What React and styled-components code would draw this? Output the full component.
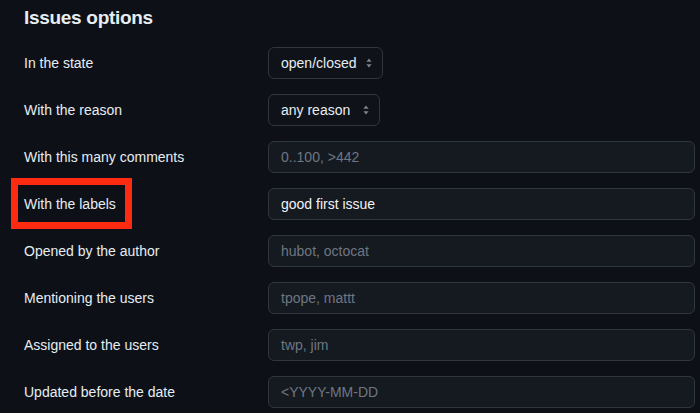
import React from 'react'
import styled, { createGlobalStyle } from 'styled-components'

const GlobalStyle = createGlobalStyle`
  html, body {
    margin: 0;
    padding: 0;
    background: #0d1117;
  }
  body {
    font-family: "Liberation Sans", Arial, sans-serif;
    color: #e6edf3;
  }
`

// page wrapper
const Page = styled.div`
  width: 700px;
  height: 413px;
  box-sizing: border-box;
  padding: 3px 5px 0 24px;
  background: #0d1117;
  overflow: hidden;
`

const Title = styled.h2`
  margin: 0 0 14px;
  font-size: 19px;
  letter-spacing: -0.3px;
  line-height: 30px;
  font-weight: 700;
  color: #e6edf3;
`

const Form = styled.div`
  display: flex;
  flex-direction: column;
  gap: 15px;
`

const Row = styled.div`
  display: grid;
  grid-template-columns: 244px 1fr;
  align-items: center;
  height: 32px;
`

const Label = styled.label`
  position: relative;
  justify-self: start;
  font-size: 14px;
  color: #e6edf3;
`

// red annotation box drawn over the label
const Highlight = styled.span`
  position: absolute;
  left: -13px;
  top: -18px;
  right: -16px;
  bottom: -17px;
  border: 7px solid #ff2a12;
  pointer-events: none;
`

const SelectBox = styled.div`
  justify-self: start;
  display: flex;
  align-items: center;
  gap: ${p => p.$gap}px;
  height: 32px;
  box-sizing: border-box;
  padding: 0 10px 0 12px;
  border: 1px solid #30363d;
  border-radius: 6px;
  background: #0f1319;
  font-size: 14px;
  color: #e6edf3;
`

const Input = styled.div`
  display: flex;
  align-items: center;
  height: 32px;
  box-sizing: border-box;
  padding: 0 12px;
  border: 1px solid #30363d;
  border-radius: 6px;
  background: #151a21;
  font-size: 14px;
  color: ${p => (p.$filled ? '#f0f3f6' : '#6e7681')};
  font-weight: ${p => (p.$filled ? 500 : 400)};
`

const Caret = () => (
  <svg width="6" height="10" viewBox="0 0 6 10">
    <path d="M3 0.5 L5.6 3.8 H0.4 Z" fill="#7d8590" />
    <path d="M3 9.5 L5.6 6.2 H0.4 Z" fill="#7d8590" />
  </svg>
)

const rows = [
  { label: 'In the state', select: 'open/closed', gap: 9 },
  { label: 'With the reason', select: 'any reason', gap: 13 },
  { label: 'With this many comments', placeholder: '0..100, >442' },
  { label: 'With the labels', value: 'good first issue', marked: true },
  { label: 'Opened by the author', placeholder: 'hubot, octocat' },
  { label: 'Mentioning the users', placeholder: 'tpope, mattt' },
  { label: 'Assigned to the users', placeholder: 'twp, jim' },
  { label: 'Updated before the date', placeholder: '<YYYY-MM-DD' },
]

export default function App() {
  return (
    <Page>
      <GlobalStyle />
      <Title>Issues options</Title>
      <Form>
        {rows.map((r, i) => (
          <Row key={i}>
            <Label>
              {r.label}
              {r.marked && <Highlight />}
            </Label>
            {r.select ? (
              <SelectBox $gap={r.gap}>
                {r.select}
                <Caret />
              </SelectBox>
            ) : (
              <Input $filled={!!r.value}>{r.value || r.placeholder}</Input>
            )}
          </Row>
        ))}
      </Form>
    </Page>
  )
}
